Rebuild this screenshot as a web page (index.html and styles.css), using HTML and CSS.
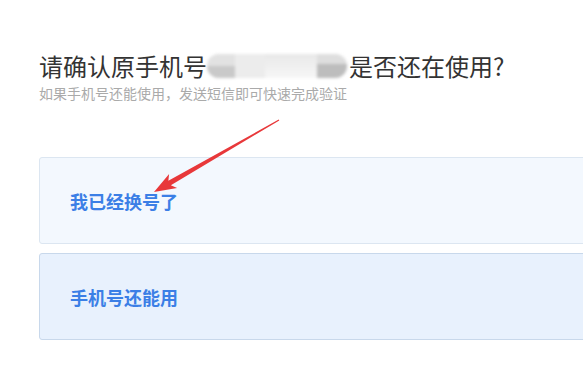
FILE: index.html
```html
<!DOCTYPE html>
<html lang="zh-CN">
<head>
<meta charset="utf-8">
<link rel="stylesheet" href="styles.css">
</head>
<body>
<div class="page">
  <h1 class="title">请确认原手机号<span class="masked"><span class="m1"></span><span class="m2"></span><span class="m3"></span><span class="m4"></span></span>是否还在使用?</h1>
  <p class="subtitle">如果手机号还能使用，发送短信即可快速完成验证</p>
  <div class="options">
    <div class="card card-a">我已经换号了</div>
    <div class="card card-b">手机号还能用</div>
  </div>
  <svg class="arrow" width="583" height="383" viewBox="0 0 583 383">
    <polygon fill="#e8383a" points="154,192 177.1,187.9 170.85,185.2 279.3,120.4 278.7,119.6 168.35,180.8 169.1,174.1"/>
  </svg>
</div>
</body>
</html>
```

FILE: styles.css
```css
html, body {
  margin: 0;
  padding: 0;
  background: #fff;
}
.page {
  position: relative;
  width: 583px;
  height: 383px;
  overflow: hidden;
  padding-left: 39px;
  box-sizing: border-box;
  font-family: "Noto Sans CJK SC", "Noto Sans", sans-serif;
}
.title {
  margin: 0;
  padding-top: 51px;
  font-size: 24px;
  line-height: 30px;
  font-weight: 400;
  color: #333;
  white-space: nowrap;
  display: flex;
  align-items: center;
}
.masked {
  display: inline-flex;
  width: 140px;
  height: 24px;
  border-radius: 12px;
  overflow: hidden;
  filter: blur(1.5px);
  background: #e6e6e6;
  margin: 0 2px 0 0;
}
.masked span { display: block; height: 100%; }
.m1 { width: 28px; background: linear-gradient(#e2e2e2 50%, #c9c9c9 50%); }
.m2 { width: 30px; background: #ececec; }
.m3 { width: 52px; background: linear-gradient(#e8e8e8, #f6f6f6); }
.m4 { width: 30px; background: linear-gradient(#dedede 40%, #bdbdbd 40%); }
.subtitle {
  margin: 2px 0 0;
  font-size: 14px;
  line-height: 20px;
  color: #aaa;
  white-space: nowrap;
}
.options {
  margin-top: 54px;
  display: flex;
  flex-direction: column;
  gap: 9px;
  width: 600px;
}
.card {
  height: 87px;
  box-sizing: border-box;
  border-radius: 3px;
  padding-left: 30px;
  display: flex;
  align-items: center;
  font-size: 18px;
  font-weight: 700;
  color: #3b7fe6;
}
.card-a {
  background: #f3f8fe;
  border: 1px solid #dce6f1;
}
.card-b {
  background: #e8f1fd;
  border: 1px solid #c8d8eb;
}
.arrow {
  position: absolute;
  left: 0;
  top: 0;
  pointer-events: none;
}
```
